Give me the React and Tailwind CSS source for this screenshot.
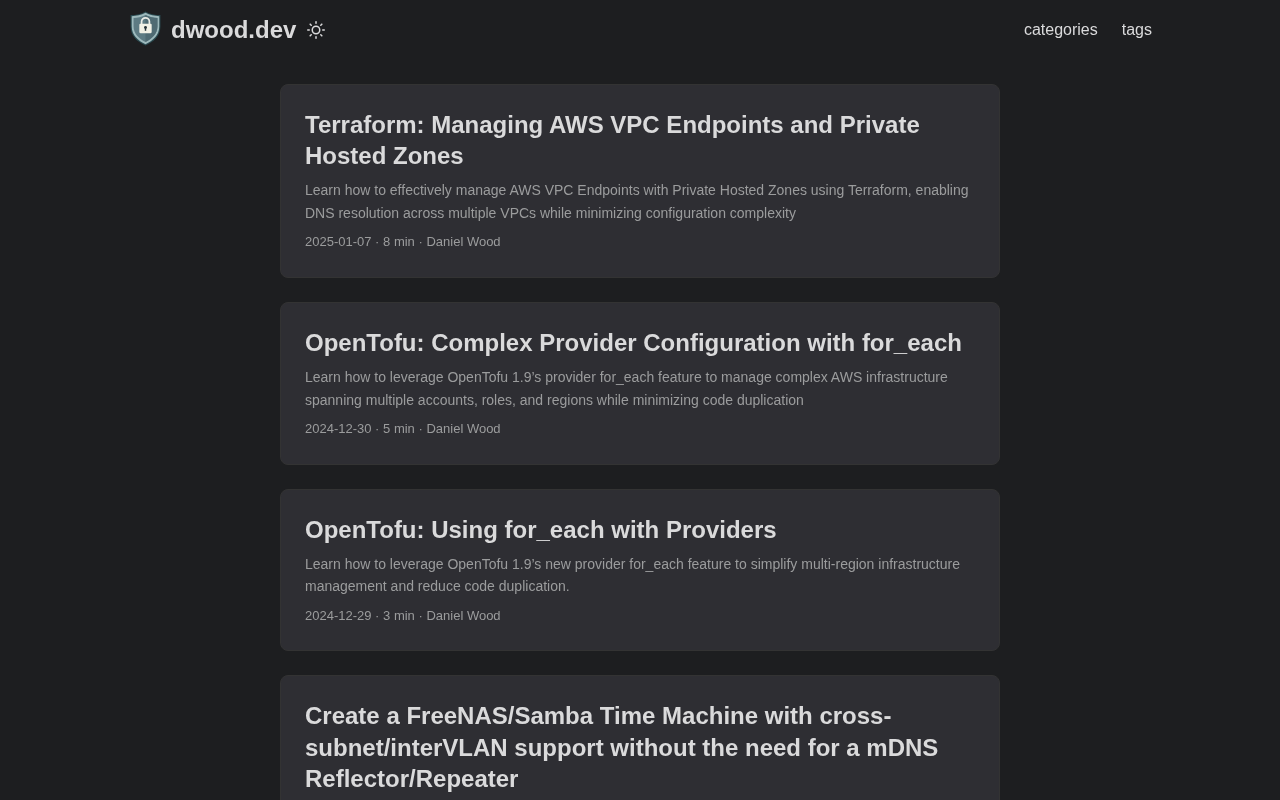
import React from 'react';

const posts = [
    {
        title: 'Terraform: Managing AWS VPC Endpoints and Private Hosted Zones',
        description: 'Learn how to effectively manage AWS VPC Endpoints with Private Hosted Zones using Terraform, enabling DNS resolution across multiple VPCs while minimizing configuration complexity',
        date: '2025-01-07',
        read: '8 min',
    },
    {
        title: 'OpenTofu: Complex Provider Configuration with for_each',
        description: 'Learn how to leverage OpenTofu 1.9’s provider for_each feature to manage complex AWS infrastructure spanning multiple accounts, roles, and regions while minimizing code duplication',
        date: '2024-12-30',
        read: '5 min',
    },
    {
        title: 'OpenTofu: Using for_each with Providers',
        description: 'Learn how to leverage OpenTofu 1.9’s new provider for_each feature to simplify multi-region infrastructure management and reduce code duplication.',
        date: '2024-12-29',
        read: '3 min',
    },
    {
        title: 'Create a FreeNAS/Samba Time Machine with cross-subnet/interVLAN support without the need for a mDNS Reflector/Repeater',
    },
];

const ShieldLogo = () => (
    <svg width="31" height="35" viewBox="0 0 30 34" className="block">
        <path d="M15 0.5 C19 3 24 4 29.5 4 L29.5 15 C29.5 24 23 30 15 33.5 C7 30 0.5 24 0.5 15 L0.5 4 C6 4 11 3 15 0.5 Z" fill="#2a4a50" />
        <path d="M15 1.8 C19 4.1 24 5 28.4 5 L28.4 15 C28.4 23.4 22.3 28.8 15 32.2 C7.7 28.8 1.6 23.4 1.6 15 L1.6 5 C6 5 11 4.1 15 1.8 Z" fill="#9db9bc" />
        <path d="M15 3.8 C18.6 5.8 23 6.6 26.6 6.7 L26.6 15 C26.6 22 21.2 27 15 30 C8.8 27 3.4 22 3.4 15 L3.4 6.7 C7 6.6 11.4 5.8 15 3.8 Z" fill="#5d7b83" />
        <path d="M15 3.8 C18.6 5.8 23 6.6 26.6 6.7 L26.6 15 C26.6 22 21.2 27 15 30 Z" fill="#4f6b73" />
        <path d="M11.2 13 L11.2 10.3 C11.2 8 13 6.6 15 6.6 C17 6.6 18.8 8 18.8 10.3 L18.8 13" fill="none" stroke="#e8ebe6" strokeWidth="1.7" />
        <rect x="9" y="12.5" width="12" height="9" rx="1" fill="#f1f1e6" />
        <circle cx="15" cy="16" r="1.4" fill="#27343a" />
        <rect x="14.3" y="16.2" width="1.4" height="3" fill="#27343a" />
    </svg>
);

const SunIcon = () => (
    <svg width="18" height="18" viewBox="0 0 24 24" fill="none" stroke="currentColor" strokeWidth="2" strokeLinecap="round" strokeLinejoin="round" className="block">
        <circle cx="12" cy="12" r="5" />
        <line x1="12" y1="1" x2="12" y2="3" />
        <line x1="12" y1="21" x2="12" y2="23" />
        <line x1="4.22" y1="4.22" x2="5.64" y2="5.64" />
        <line x1="18.36" y1="18.36" x2="19.78" y2="19.78" />
        <line x1="1" y1="12" x2="3" y2="12" />
        <line x1="21" y1="12" x2="23" y2="12" />
        <line x1="4.22" y1="19.78" x2="5.64" y2="18.36" />
        <line x1="18.36" y1="5.64" x2="19.78" y2="4.22" />
    </svg>
);

const PostCard = ({ post }) => (
    <article className="mb-6 rounded-lg border border-[#333333] bg-[#2e2e33] p-6">
        <h2 className="text-2xl leading-[1.3] font-bold text-[#dadadb]">{post.title}</h2>
        {post.description && (
            <p className="my-2 text-sm leading-[1.6] text-[#9b9c9d]">{post.description}</p>
        )}
        {post.date && (
            <footer className="text-[13px] leading-[1.6] text-[#9b9c9d]">
                {post.date}&nbsp;·&nbsp;{post.read}&nbsp;·&nbsp;Daniel Wood
            </footer>
        )}
    </article>
);

export default function App() {
    return (
        <div className="h-screen overflow-hidden bg-[#1d1e20] font-['Liberation_Sans',Arial,sans-serif] text-[#dadadb]">
            <header className="mx-auto flex h-[60px] w-[1024px] items-center justify-between [will-change:transform]">
                <div className="flex items-center">
                    <a href="#" className="mr-[11px] flex items-center">
                        <span className="mr-[10px] mb-[4px] ml-[2px]"><ShieldLogo /></span>
                        <span className="text-2xl font-bold">dwood.dev</span>
                    </a>
                    <button className="text-[#dadadb]"><SunIcon /></button>
                </div>
                <nav className="flex gap-6 text-base">
                    <a href="#">categories</a>
                    <a href="#">tags</a>
                </nav>
            </header>
            <main className="mx-auto w-[720px] pt-6 [will-change:transform]">
                {posts.map((post) => (
                    <PostCard key={post.title} post={post} />
                ))}
            </main>
        </div>
    );
}
